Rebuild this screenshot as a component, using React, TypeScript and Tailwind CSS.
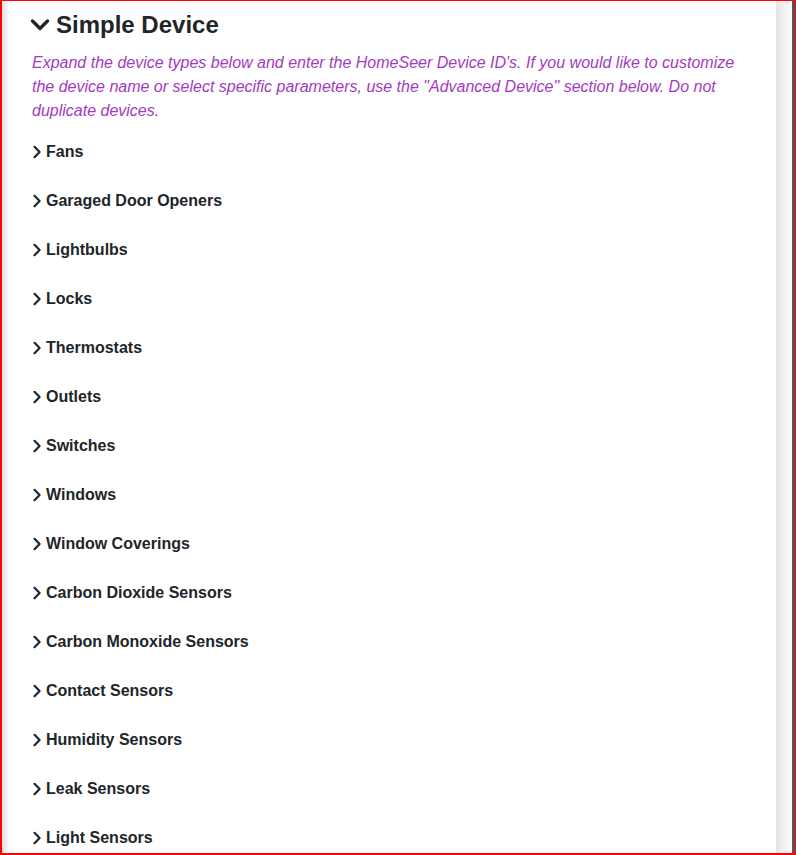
import React from 'react';

const deviceTypes = [
  'Fans',
  'Garaged Door Openers',
  'Lightbulbs',
  'Locks',
  'Thermostats',
  'Outlets',
  'Switches',
  'Windows',
  'Window Coverings',
  'Carbon Dioxide Sensors',
  'Carbon Monoxide Sensors',
  'Contact Sensors',
  'Humidity Sensors',
  'Leak Sensors',
  'Light Sensors',
];

function ChevronRight() {
  return (
    <svg width="10" height="14" viewBox="0 0 10 14" className="shrink-0">
      <path d="M2.5 1.8 L7.6 7 L2.5 12.2" fill="none" stroke="#212529" strokeWidth="2.2" strokeLinecap="round" strokeLinejoin="round" />
    </svg>
  );
}

function ChevronDown() {
  return (
    <svg width="20" height="14" viewBox="0 0 20 14" className="shrink-0">
      <path d="M2.5 3 L10 10.5 L17.5 3" fill="none" stroke="#212529" strokeWidth="3.4" strokeLinecap="round" strokeLinejoin="round" />
    </svg>
  );
}

export default function App() {
  return (
    <div className="w-[796px] h-[855px] overflow-hidden border-l-2 border-t border-r border-b-2 border-[#ff0000] bg-white font-['Liberation_Sans',Arial,sans-serif]">
      <div className="flex h-full">
        <div className="w-[6px] bg-gradient-to-r from-[#e2e2e2] to-[#f6f6f6]" />
        <div className="w-[768px] bg-white pl-[24px] pr-[22px] pt-[9px]">
          <div className="flex items-center gap-[6px] -ml-[2px] h-[29px]">
            <ChevronDown />
            <h2 className="text-[24px] leading-[29px] font-bold text-[#212529]">Simple Device</h2>
          </div>
          <p className="mt-[12px] text-[16px] leading-[24px] italic text-[#a23bbf]">
            Expand the device types below and enter the HomeSeer Device ID's. If you would like to customize
            the device name or select specific parameters, use the "Advanced Device" section below. Do not
            duplicate devices.
          </p>
          <ul className="mt-[4px]">
            {deviceTypes.map((name) => (
              <li key={name} className="h-[49px] flex items-center gap-[4px]">
                <ChevronRight />
                <span className="text-[16px] font-bold text-[#212529]">{name}</span>
              </li>
            ))}
          </ul>
        </div>
        <div className="w-[16px] bg-gradient-to-r from-[#e4e4e4] via-[#f2f2f2] to-[#fbfbfb]" />
        <div className="w-[3px] bg-[#53575c]" />
      </div>
    </div>
  );
}
